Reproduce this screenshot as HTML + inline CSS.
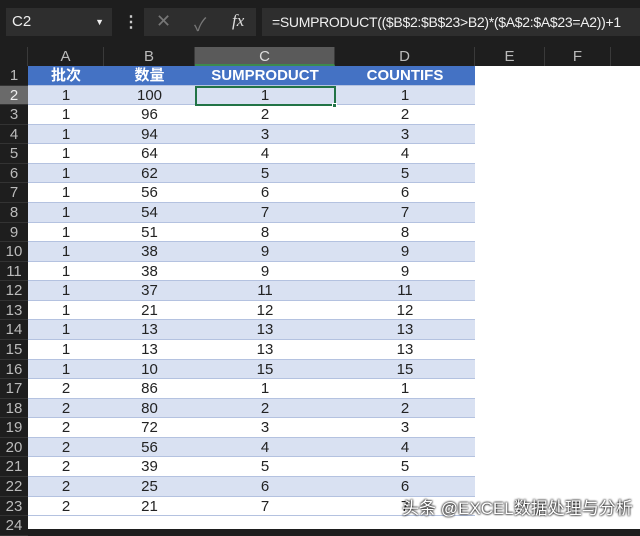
<!DOCTYPE html>
<html><head><meta charset="utf-8"><style>
*{margin:0;padding:0;box-sizing:border-box}
body{width:640px;height:529px;background:#1e1e1e;overflow:hidden;font-family:"Liberation Sans","Noto Sans CJK SC",sans-serif;position:relative}
.box{position:absolute;background:#2e2e2e;color:#eee;font-size:15px}
.hdr{position:absolute;top:47px;height:19px;color:#bbb;font-size:15px;text-align:center;line-height:19px;border-right:1px solid #3a3a3a}
.row{position:absolute;left:0;width:640px;height:19.57px;font-size:15px;line-height:19px}
.row div{position:absolute;top:0;height:100%;text-align:center;color:#222}
.rn{left:0;width:28px;background:#1e1e1e;color:#bbb!important;border-bottom:1px solid #333}
.c{border-bottom:1px solid #b4c2e0}
.b{background:#d9e1f2}
.w{background:#fff}
.h div.c{background:#4472c4;color:#fff;font-weight:bold}
</style></head><body>
<div class="box" style="left:6px;top:8px;width:106px;height:28px;line-height:28px;padding-left:6px">C2<span style="position:absolute;right:8px;font-size:9px">▼</span></div>
<div style="position:absolute;left:123px;top:12px;color:#ccc;font-size:16px;font-weight:bold">⋮</div>
<div class="box" style="left:144px;top:8px;width:112px;height:28px">
<span style="position:absolute;left:12px;top:3px;color:#777;font-size:18px">✕</span>
<span style="position:absolute;left:50px;top:3px;color:#777;font-size:18px">✓</span>
<span style="position:absolute;left:88px;top:3px;color:#ddd;font-family:'Liberation Serif',serif;font-style:italic;font-size:17px">fx</span></div>
<div class="box" style="left:262px;top:8px;width:378px;height:28px;line-height:28px;padding-left:10px;color:#f0f0f0;white-space:nowrap;overflow:hidden;font-size:14px;letter-spacing:-0.3px">=SUMPRODUCT(($B$2:$B$23&gt;B2)*($A$2:$A$23=A2))+1</div>
<div class="hdr" style="left:0;width:28px"></div>
<div class="hdr" style="left:28px;width:76px">A</div>
<div class="hdr" style="left:104px;width:91px">B</div>
<div class="hdr" style="left:195px;width:140px;background:#5a5a5a;color:#ddd;border-bottom:2px solid #3d8a4e">C</div>
<div class="hdr" style="left:335px;width:140px">D</div>
<div class="hdr" style="left:475px;width:70px">E</div>
<div class="hdr" style="left:545px;width:66px">F</div>
<div style="position:absolute;left:28px;top:66px;width:612px;height:463px;background:#fff"></div>
<div id="g"></div>
<div style="position:absolute;left:195px;top:85.5px;width:141px;height:20.5px;border:2px solid #217346"></div>
<div style="position:absolute;left:332px;top:103px;width:5px;height:5px;background:#217346;border:1px solid #fff"></div>
<div style="position:absolute;left:402px;top:494px;font-size:17px;color:#fff;text-shadow:0 0 2px #000,0 0 2px #000">头条 @EXCEL数据处理与分析</div>
<script>
var B=[100,96,94,64,62,56,54,51,38,38,37,21,13,13,10,86,80,72,56,39,25,21];
var C=[1,2,3,4,5,6,7,8,9,9,11,12,13,13,15,1,2,3,4,5,6,7];
var cols=[[28,76],[104,91],[195,140],[335,140]];
var h='';
function r(n,vals,cls,extra){var top=66+(n-1)*19.57;h+='<div class="row '+extra+'" style="top:'+top+'px"><div class="rn" style="'+(n==2?'background:#6a6a6a;color:#eee!important':'')+'">'+n+'</div>';
for(var i=0;i<4;i++)h+='<div class="c '+cls+'" style="left:'+cols[i][0]+'px;width:'+cols[i][1]+'px">'+vals[i]+'</div>';h+='</div>';}
r(1,['批次','数量','SUMPRODUCT','COUNTIFS'],'','h');
for(var k=0;k<22;k++){var n=k+2;r(n,[k<15?1:2,B[k],C[k],C[k]],n%2==0?'b':'w','');}
h+='<div class="row" style="top:'+(66+23*19.57)+'px"><div class="rn">24</div></div>';
document.getElementById('g').innerHTML=h;
</script>
</body></html>
